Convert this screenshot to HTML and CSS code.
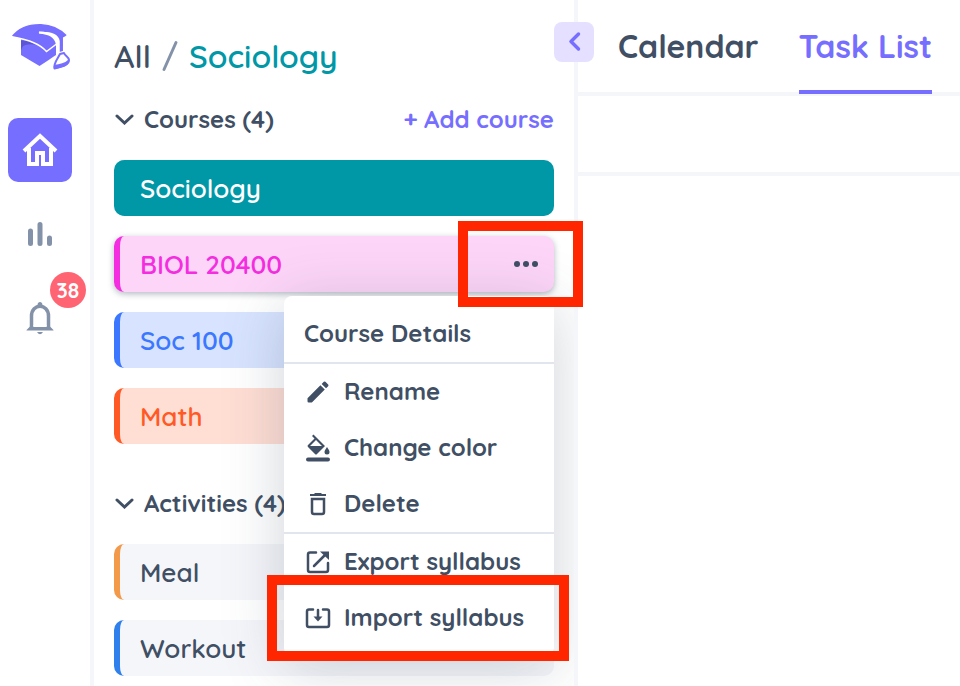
FILE: index.html
```html
<!DOCTYPE html>
<html lang="en">
<head>
<meta charset="utf-8">
<meta name="viewport" content="width=device-width, initial-scale=1">
<title>Task List</title>
<link rel="stylesheet" href="styles.css">
</head>
<body>
<div class="app">
  <nav class="rail" aria-label="Main">
    <a class="logo" href="#" aria-label="Home page">
      <svg width="60" height="50" viewBox="0 0 60 50">
        <path fill="#766eff" d="M10 17L45 19V33C40 36 35 40 28.500 44L10 33Z"/>
        <path fill="#5c55d4" d="M10 18.500C18 18 23 19 27 23C20 21.500 13 22 11.500 25L10 28Z"/>
        <path fill="#766eff" stroke="#fff" stroke-width="1.500" d="M-.5 14.500C7 4 20 1 30 1.200C41 1.500 50 6 56.700 13C55 15 54 15.500 52.700 16V29.500L48 31V19C47 13 40 10 28 10.500C38 12 44 14 45.500 22L35.500 29.500C29 22 20 18.500 -.5 14.500Z"/>
        <path fill="none" stroke="#fff" stroke-width="2" d="M28 10.500C40 11 46 14 46.500 20V34"/>
        <path fill="none" stroke="#766eff" stroke-width="2" stroke-linejoin="round" d="M49 32L53 31C54 34 58 35 58 38C58 42 54 44 43.500 46.500C42 42 47 36 49 32Z"/>
        <path fill="#766eff" d="M43 43C49 42 54 41 57 38V42C54 45 49 46 43 47Z"/>
      </svg>
    </a>
    <a class="rail-link active" href="#" aria-label="Home">
      <svg width="40" height="40" viewBox="0 0 40 40"><path fill="none" stroke="#fff" stroke-width="4" d="M4 21L20 6L36 21M9 18V34H17V23H23V34H31V18"/></svg>
    </a>
    <a class="rail-link" href="#" aria-label="Statistics">
      <svg width="28" height="28" viewBox="0 0 28 28" fill="none" stroke="#8492a9" stroke-width="5" stroke-linecap="round"><path d="M4.500 11V23.500M14 4.500V23.500M23.500 18V23.500"/></svg>
    </a>
    <a class="rail-link" href="#" aria-label="Notifications">
      <svg width="28" height="34" viewBox="0 0 28 34"><path fill="none" stroke="#8492a9" stroke-width="3.500" d="M5.500 28V15C5.500 2 22.500 2 22.500 15V28"/><path fill="#8492a9" d="M.5 29L4 25.500H24L27.500 29V29.500H.5ZM11.500 6V4C11.500 0 16.500 0 16.500 4V6ZM11 31H17Q14 35.500 11 31Z"/><path fill="#fff" d="M7.500 24H20.500V26H7.500Z"/></svg>
      <span class="badge">38</span>
    </a>
  </nav>

  <aside class="sidebar">
    <button class="collapse" type="button" aria-label="Collapse sidebar">
      <svg width="20" height="24" viewBox="0 0 20 24"><path fill="none" stroke="#766eff" stroke-width="3.500" stroke-linecap="round" stroke-linejoin="round" d="M14.500 4L7 11.500L14.500 19"/></svg>
    </button>
    <h1 class="crumbs"><a href="#">All</a><svg class="slash" width="18" height="32" viewBox="0 0 18 32"><path stroke="#8492a9" stroke-width="3" stroke-linecap="round" d="M3 29.500L15 2.500"/></svg><span class="current">Sociology</span></h1>

    <section class="group">
      <div class="group-head">
        <button class="toggle" type="button"><svg width="20" height="12" viewBox="0 0 20 12"><path d="M3 3L10.500 10L18 3"/></svg>Courses (4)</button>
        <button class="add" type="button">+ Add course</button>
      </div>
      <ul class="cards">
        <li class="card selected"><a href="#">Sociology</a></li>
        <li class="card pink">
          <a href="#">BIOL 20400</a>
          <button class="more" type="button" aria-label="Course options"><svg width="24" height="8" viewBox="0 0 24 8" fill="#404f64"><circle cx="3" cy="4" r="3"/><circle cx="12" cy="4" r="3"/><circle cx="21" cy="4" r="3"/></svg></button>
          <div class="menu">
            <a class="item" href="#">Course Details</a>
            <hr>
            <button class="item" type="button"><svg width="28" height="28" viewBox="0 0 24 24"><path fill="#404f64" d="M3 17.250V20Q3 21 4 21H6.750L17.810 9.940L14.060 6.190ZM20.710 7.040Q21.300 6.300 20.710 5.630L18.370 3.290Q17.700 2.700 16.960 3.290L15.130 5.120L18.880 8.870Z"/></svg>Rename</button>
            <button class="item" type="button"><svg width="28" height="28" viewBox="0 0 28 28"><path fill="#404f64" fill-rule="evenodd" d="M8 2L9.500 .5L21 12L13 20Q12 21 11 20L4 13Q3 12 4 11L10.500 4.500ZM12 6L6 12H18Z"/><path fill="#404f64" d="M23 13C25 16 25.500 17 25.500 18A2.500 2.500 0 0 1 20.500 18C20.500 17 21 16 23 13Z"/><rect x="2" y="23.500" width="24" height="4" rx="2" fill="#404f64"/></svg>Change color</button>
            <button class="item" type="button"><svg width="28" height="28" viewBox="0 0 28 28"><path fill="none" stroke="#404f64" stroke-width="2.500" d="M8 9H20V22Q20 24 18 24H10Q8 24 8 22Z"/><path fill="#404f64" d="M6 4H10L11 3H17L18 4H22V6H6Z"/></svg>Delete</button>
            <hr>
            <button class="item" type="button"><svg width="28" height="28" viewBox="0 0 28 28"><path fill="none" stroke="#404f64" stroke-width="2.500" stroke-linecap="round" d="M12 4.500H6Q4 4.500 4 6.500V22Q4 24 6 24H22Q24 24 24 22V15M10 18L22 6"/><path fill="#404f64" d="M16 3.500H25V12Z"/></svg>Export syllabus</button>
            <button class="item marked" type="button"><svg width="28" height="28" viewBox="0 0 28 28"><path fill="none" stroke="#404f64" stroke-width="2.500" stroke-linecap="round" d="M9 5.500H5Q3 5.500 3 7.500V21Q3 23 5 23H23Q25 23 25 21V7.500Q25 5.500 23 5.500H19M14 6V14"/><path fill="#404f64" d="M9.500 12.500H18.500L14 17.500Z"/></svg>Import syllabus</button>
          </div>
        </li>
        <li class="card blue"><a href="#">Soc 100</a></li>
        <li class="card orange"><a href="#">Math</a></li>
      </ul>
    </section>

    <section class="group">
      <div class="group-head">
        <button class="toggle" type="button"><svg width="20" height="12" viewBox="0 0 20 12"><path d="M3 3L10.500 10L18 3"/></svg>Activities (4)</button>
      </div>
      <ul class="cards">
        <li class="card meal"><a href="#">Meal</a></li>
        <li class="card workout"><a href="#">Workout</a></li>
      </ul>
    </section>
  </aside>

  <main class="main">
    <nav class="tabs" aria-label="Views">
      <a class="tab" href="#">Calendar</a>
      <a class="tab active" href="#">Task List</a>
    </nav>
    <div class="toolbar"></div>
  </main>
</div>
</body>
</html>
```
FILE: styles.css
```css
* {
  box-sizing: border-box;
}

body {
  margin: 0;
  overflow: hidden;
  background: #fff;
  color: #404f64;
  font-family: Quicksand, Lato, sans-serif;
  font-size: 24px;
  font-weight: 700;
}

a {
  color: inherit;
  text-decoration: none;
}

button {
  padding: 0;
  border: 0;
  background: none;
  color: inherit;
  font: inherit;
  cursor: pointer;
}

svg {
  display: block;
  flex: none;
}

.app {
  display: flex;
  height: 100vh;
}

.rail {
  flex: none;
  display: flex;
  flex-direction: column;
  gap: 20px;
  width: 94px;
  padding: 22px 18px 0 8px;
  border-right: 4px solid #f5f6fa;
}

.logo {
  display: block;
  height: 76px;
  padding-left: 3px;
}

.rail-link {
  position: relative;
  display: flex;
  align-items: center;
  justify-content: center;
  height: 64px;
  border-radius: 10px;
}

.rail-link.active {
  background: #766eff;
}

.badge {
  position: absolute;
  top: -14px;
  right: -14px;
  width: 36px;
  border-radius: 50%;
  background: #ff6472;
  color: #fff;
  font-size: 21px;
  line-height: 36px;
  text-align: center;
}

.sidebar {
  position: relative;
  z-index: 1;
  flex: none;
  width: 484px;
  padding: 36px 20px 0;
  border-right: 4px solid #f5f6fa;
}

.collapse {
  position: absolute;
  top: 22px;
  right: -20px;
  display: grid;
  place-items: center;
  width: 40px;
  height: 40px;
  border-radius: 8px;
  background: #e5e0ff;
}

.crumbs {
  display: flex;
  align-items: center;
  gap: 10px;
  margin: 0 0 24px;
  font-size: 32px;
  font-weight: 600;
  line-height: 40px;
}

.current {
  color: #0097a7;
}

.group {
  margin-bottom: 40px;
}

.group-head {
  display: flex;
  justify-content: space-between;
  margin-bottom: 22px;
  line-height: 38px;
}

.toggle {
  display: flex;
  align-items: center;
  gap: 10px;
}

.toggle path {
  fill: none;
  stroke: #404f64;
  stroke-width: 3;
  stroke-linecap: round;
}

.add {
  color: #766eff;
}

.cards {
  display: grid;
  gap: 20px;
  margin: 0;
  padding: 0;
  list-style: none;
}

.card {
  position: relative;
  display: flex;
  align-items: center;
  height: 56px;
  padding: 0 16px 0 20px;
  border-left: 6px solid;
  border-radius: 10px;
  background: #f5f6fa;
  font-size: 26px;
  font-weight: 600;
}

.card > a {
  flex: 1;
}

.selected {
  border-color: #0097a7;
  background: #0097a7;
  color: #fff;
}

.pink {
  z-index: 2;
  border-color: #f52de0;
  background: #fdd5f8;
  box-shadow: 0 2px 6px rgba(64, 79, 100, 0.4);
  color: #f52de0;
}

.pink::after {
  content: "";
  position: absolute;
  z-index: 2;
  inset: -15px -29px -15px 338px;
  border: 10px solid #ff2600;
  pointer-events: none;
}

.blue {
  border-color: #3b78ff;
  background: #d8e4ff;
  color: #3b78ff;
}

.orange {
  border-color: #ff5a26;
  background: #ffded4;
  color: #ff5a26;
}

.meal,
.workout {
  border-color: #f2994a;
  color: #404f64;
}

.workout {
  border-color: #2f80ed;
}

.menu {
  position: absolute;
  z-index: 1;
  top: 60px;
  right: 0;
  width: 270px;
  padding: 10px 0;
  border-radius: 8px;
  background: #fff;
  box-shadow: 0 10px 60px rgba(64, 79, 100, 0.25);
  clip-path: inset(-60px -20px -80px -80px);
  color: #404f64;
  font-size: 24px;
  font-weight: 700;
}

.menu hr {
  height: 2px;
  margin: 0;
  border: 0;
  background: #e0e5ee;
}

.item {
  position: relative;
  display: flex;
  align-items: center;
  gap: 12px;
  width: 100%;
  height: 56px;
  padding: 0 20px 2px;
}

.item svg {
  margin-top: 2px;
}

.marked::after {
  content: "";
  position: absolute;
  inset: -15px -15px -15px -17px;
  border: 10px solid #ff2600;
  pointer-events: none;
}

.main {
  flex: 1;
  min-width: 0;
}

.tabs {
  display: flex;
  gap: 40px;
  height: 96px;
  padding-left: 40px;
  border-bottom: 4px solid #f5f6fa;
  font-size: 32px;
  line-height: 92px;
  white-space: nowrap;
}

.tab.active {
  height: 94px;
  border-bottom: 4px solid #766eff;
  color: #766eff;
}

.toolbar {
  height: 80px;
  border-bottom: 4px solid #f5f6fa;
}
```
